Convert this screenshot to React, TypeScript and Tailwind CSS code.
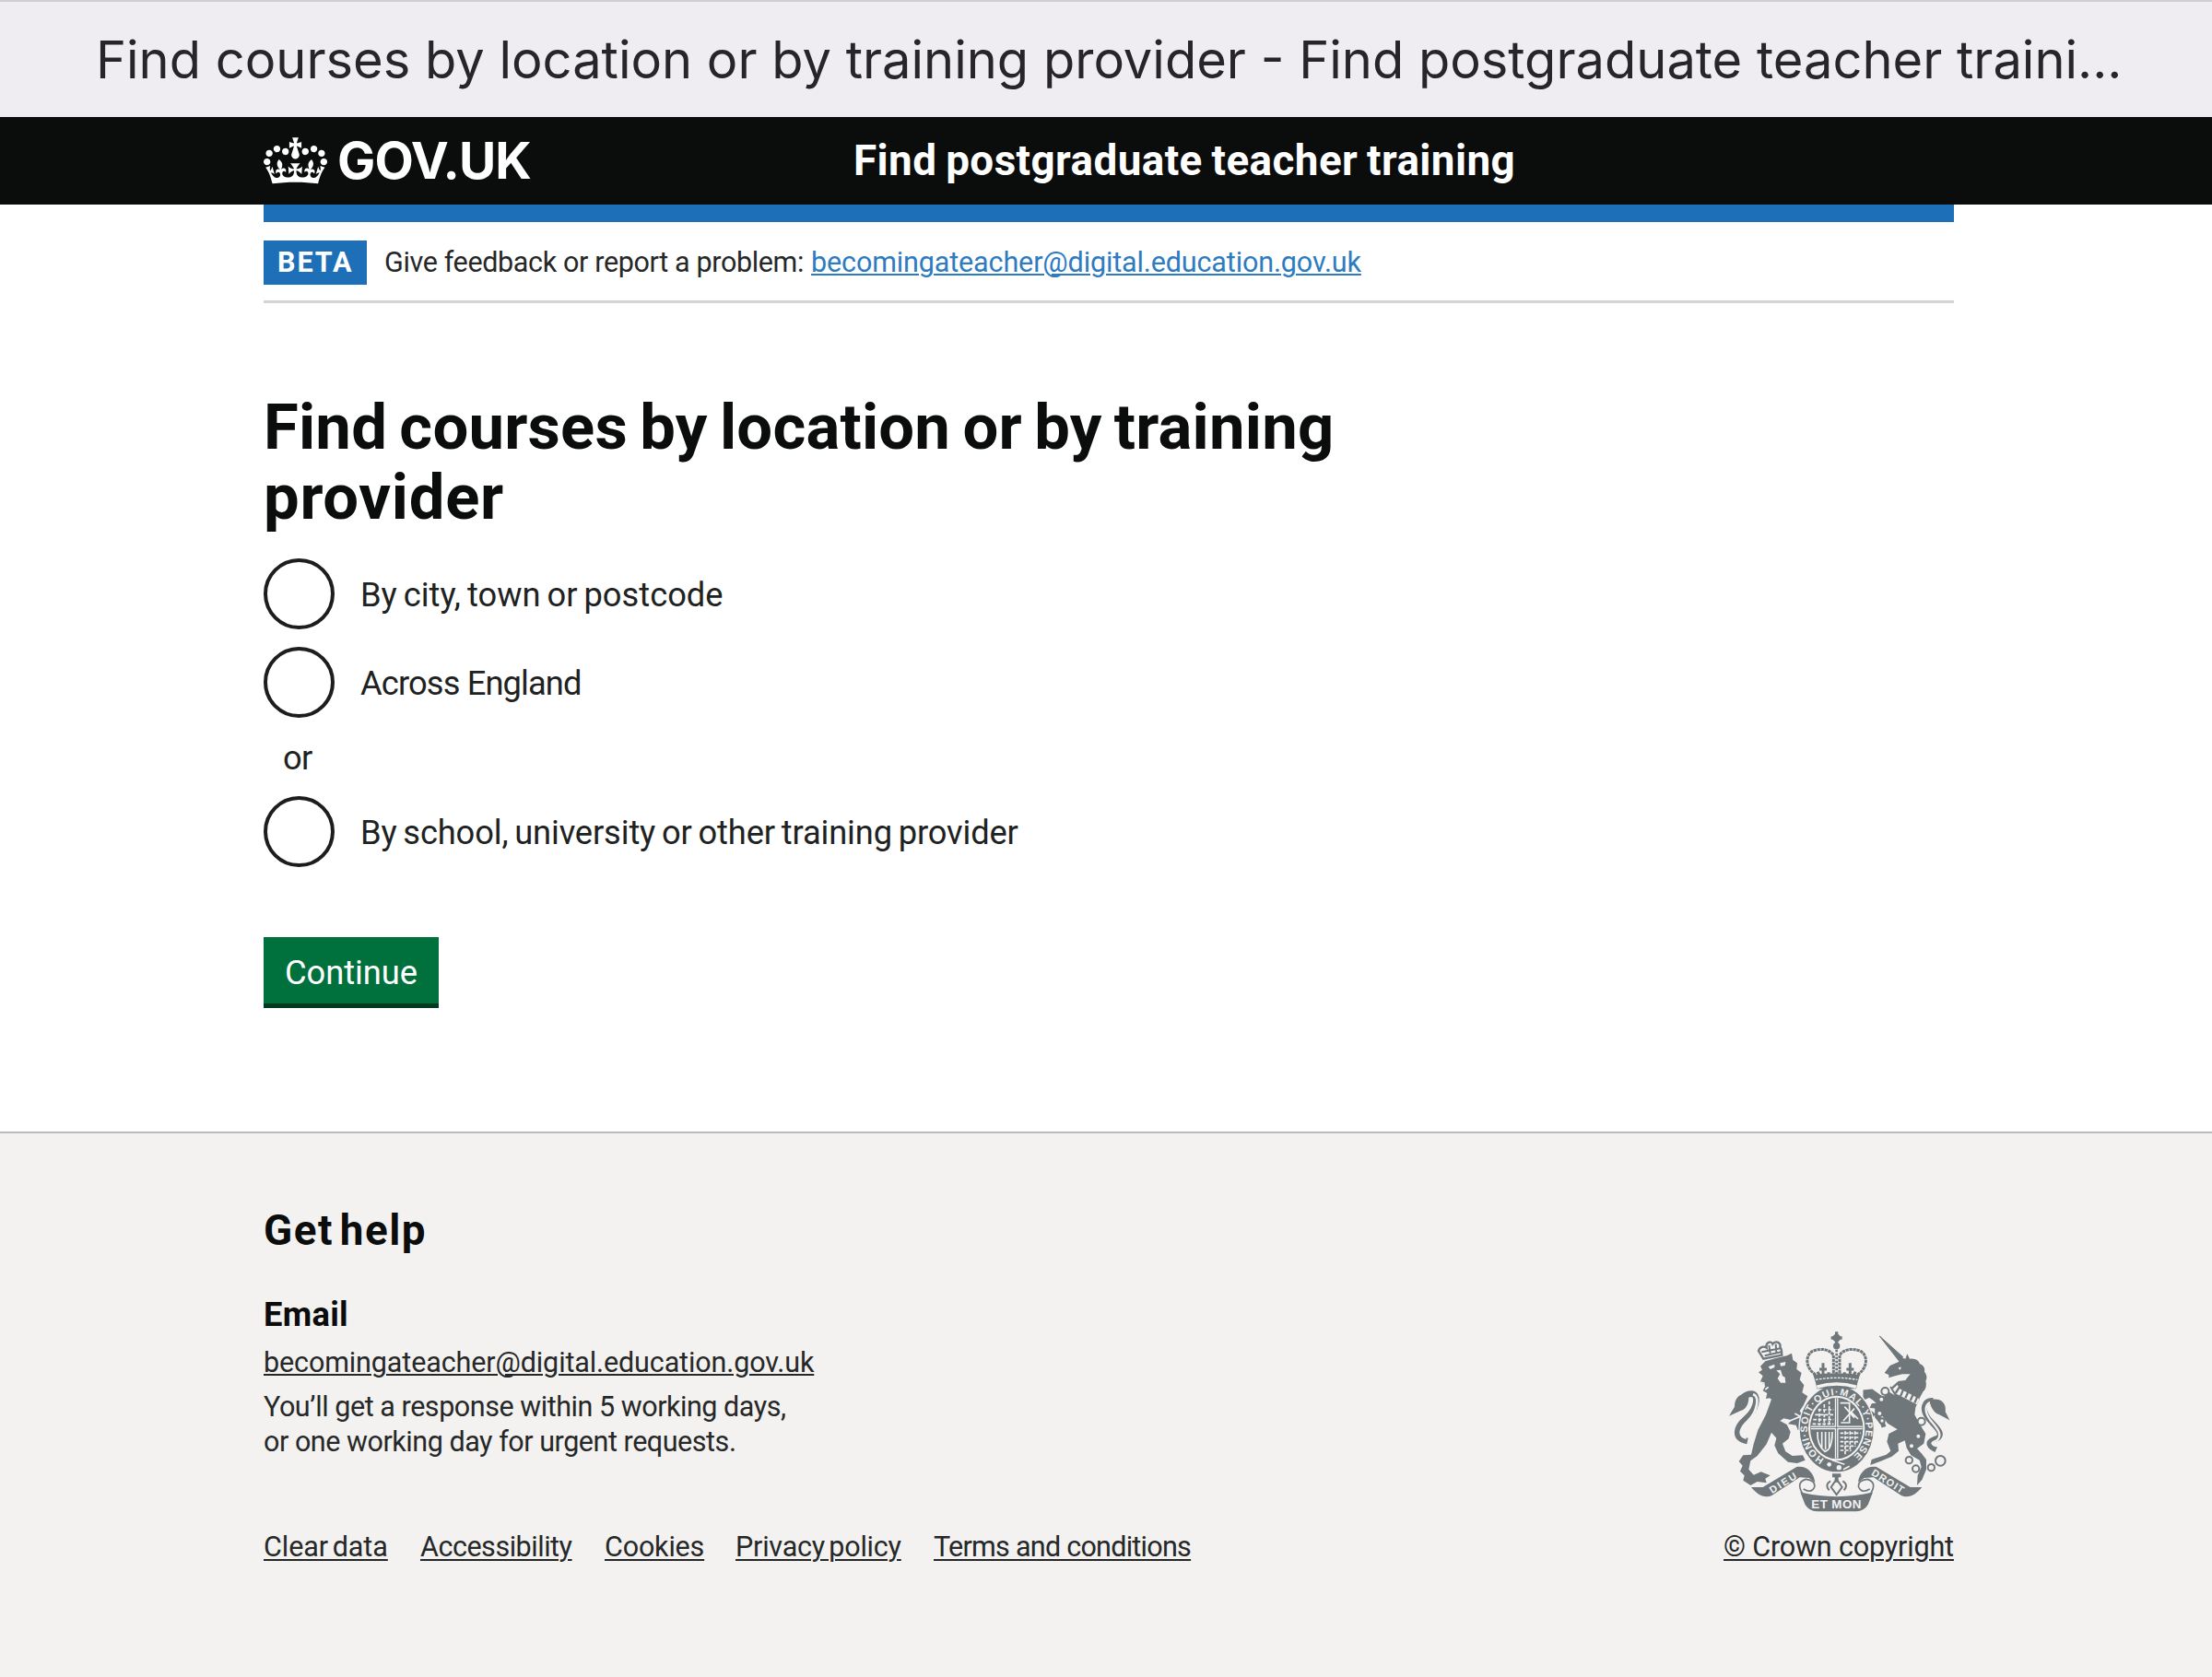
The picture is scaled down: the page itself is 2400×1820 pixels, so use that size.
const CROWN_PATH =
  "M25 30.2c3.5 1.5 7.7-.2 9.1-3.7 1.5-3.6-.2-7.8-3.9-9.2-3.6-1.4-7.6.3-9.1 3.9-1.4 3.5.3 7.5 3.9 9zM9 39.5c3.6 1.5 7.8-.2 9.2-3.7 1.5-3.6-.2-7.8-3.9-9.1-3.6-1.5-7.6.2-9.1 3.8-1.4 3.5.3 7.5 3.8 9zM4.4 57.2c3.5 1.5 7.7-.2 9.1-3.8 1.5-3.6-.2-7.7-3.9-9.1-3.5-1.5-7.6.3-9.1 3.8-1.4 3.5.3 7.6 3.9 9.1zm38.3-21.4c3.5 1.5 7.7-.2 9.1-3.8 1.5-3.6-.2-7.7-3.9-9.1-3.6-1.5-7.6.3-9.1 3.8-1.3 3.6.4 7.7 3.9 9.1zm64.4-5.6c-3.6 1.5-7.8-.2-9.1-3.7-1.5-3.6.2-7.8 3.8-9.2 3.6-1.4 7.7.3 9.2 3.9 1.3 3.5-.4 7.5-3.9 9zm15.9 9.3c-3.6 1.5-7.7-.2-9.1-3.7-1.5-3.6.2-7.8 3.7-9.1 3.6-1.5 7.7.2 9.2 3.8 1.5 3.5-.3 7.5-3.8 9zm4.7 17.7c-3.6 1.5-7.8-.2-9.2-3.8-1.5-3.6.2-7.7 3.9-9.1 3.6-1.5 7.7.3 9.2 3.8 1.3 3.5-.4 7.6-3.9 9.1zM89.3 35.8c-3.6 1.5-7.8-.2-9.2-3.8-1.4-3.6.2-7.7 3.9-9.1 3.6-1.5 7.7.3 9.2 3.8 1.4 3.6-.3 7.7-3.9 9.1zM69.7 17.7l8.9 4.7V9.3l-8.9 2.8c-.2-.3-.5-.6-.9-.9L72.4 0H59.6l3.5 11.2c-.3.3-.6.5-.9.9l-8.8-2.8v13.1l8.8-4.7c.3.3.6.7.9.9l-5 15.4v.1c-.2.8-.4 1.6-.4 2.4 0 4.1 3.1 7.5 7 8.1h.2c.3 0 .7.1 1 .1.4 0 .7 0 1-.1h.2c4-.6 7.1-4.1 7.1-8.1 0-.8-.1-1.7-.4-2.4V34l-5.1-15.4c.4-.2.7-.6 1-.9zM66 92.8c16.9 0 32.8 1.1 47.1 3.2 4-16.9 8.9-26.7 14-33.5l-9.6-3.4c1 4.9 1.1 7.2 0 10.2-1.5-1.4-3-4.3-4.2-8.7L108.6 76c2.8-2 5-3.2 7.5-3.3-4.4 9.4-10 11.9-13.6 11.2-4.3-.8-6.3-4.6-5.6-7.9 1-4.7 5.7-5.9 8-.5 4.3-8.7-3-11.4-7.6-8.8 7.1-7.2 7.9-13.5 2.1-21.1-8 6.1-8.1 12.3-4.5 20.8-4.7-5.4-12.1-2.5-9.5 6.2 3.4-5.2 7.9-2 7.2 3.1-.6 4.3-6.4 7.8-13.5 7.2-10.3-.9-10.9-8-11.2-13.8 2.5-.5 7.1 1.8 11 7.3L80.2 60c-4.1 4.4-8 5.3-12.3 5.4 1.4-4.4 8-11.6 8-11.6H55.5s6.4 7.2 7.9 11.6c-4.2-.1-8-1-12.3-5.4l1.4 16.4c3.9-5.5 8.5-7.7 10.9-7.3-.3 5.8-.9 12.8-11.1 13.8-7.2.6-12.9-2.9-13.5-7.2-.7-5 3.8-8.3 7.1-3.1 2.7-8.7-4.6-11.6-9.4-6.2 3.7-8.5 3.6-14.7-4.6-20.8-5.8 7.6-5 13.9 2.2 21.1-4.7-2.6-11.9.1-7.7 8.8 2.3-5.5 7.1-4.2 8.1.5.7 3.3-1.3 7.1-5.7 7.9-3.5.7-9-1.8-13.5-11.2 2.5.1 4.7 1.3 7.5 3.3l-4.7-15.4c-1.2 4.4-2.7 7.2-4.3 8.7-1.1-3-.9-5.3 0-10.2l-9.5 3.4c5 6.9 9.9 16.7 14 33.5 14.8-2.1 30.8-3.2 47.7-3.2z";

function Crown() {
  return (
    <svg viewBox="0 0 132 97" className="mb-px h-[51px] w-[69px] fill-white" aria-hidden="true">
      <path fillRule="evenodd" d={CROWN_PATH} />
    </svg>
  );
}

const INK = "#6f777b";
const PAPER = "#f3f2f1";

function RoyalArms() {
  return (
    <svg viewBox="30 30 750 618" className="h-[206px] w-[250px]" aria-hidden="true">
      {/* Lion: tail, body, crown and face */}
      <path d="M108 402 C60 392 72 356 102 330 C140 298 146 250 122 248 C108 248 100 252 92 262" fill="none" stroke={INK} strokeWidth="20" />
      <path d="M104 392 C74 384 86 358 110 336 C142 304 148 254 126 250" fill="none" stroke={PAPER} strokeWidth="8" />
      <path d="M112 248 C82 246 66 262 66 290 L48 320 L84 304 C102 300 112 282 112 262 Z" fill={INK} />
      <path
        d="M150 158 L166 142 L200 132 L236 124 L252 116 L256 138 L270 148 L268 168 L284 180 L278 202 L292 220 L286 244 L304 256 L290 286 L278 304 L292 326 L302 350 L300 384 L284 376 L290 360 L272 366 L266 350 L240 346 L252 334 L226 328 L214 336 L236 348 L248 372 L242 394 L222 410 L232 436 L254 450 L288 448 L296 464 L270 474 L240 470 L208 442 L196 416 L202 392 L186 374 L170 412 L140 450 L118 466 L112 494 L128 512 L152 502 L182 514 L166 524 L170 538 L140 534 L118 546 L94 530 L98 514 L84 500 L92 482 L80 468 L94 448 L120 446 L128 412 L142 366 L168 316 L186 266 L180 262 L168 264 L172 246 L158 238 L166 222 L150 208 L158 190 L144 178 L156 170 Z"
        fill={INK}
      />
      <path d="M160 134 L144 108 C148 94 162 92 170 98 C166 80 186 74 190 86 C200 72 218 82 214 96 C222 104 218 116 220 122 Z" fill={PAPER} stroke={INK} strokeWidth="7" />
      <path d="M154 112 L216 100 M164 124 L218 112 M178 90 L182 116 M200 86 L202 112" stroke={INK} strokeWidth="6" />
      <path d="M176 160 L196 152 L196 162 L182 168 Z M214 148 L232 144 L230 156 L216 158 Z M202 172 L216 170 L222 190 L230 194 L232 212 L216 212 L206 198 L214 184 Z" fill={PAPER} />
      <path d="M152 210 L162 214 L158 230 M166 234 L176 226 M240 338 L280 322 L262 312" stroke={PAPER} strokeWidth="5" fill="none" />

      {/* Unicorn: horn, tail, head, body and chain */}
      <path d="M538 60 L614 128 L602 142 Z" fill={INK} stroke={INK} strokeWidth="3" />
      <path d="M722 430 C700 420 690 406 716 396 C760 384 714 350 698 330 C672 296 684 268 712 270" fill="none" stroke={INK} strokeWidth="18" />
      <path d="M722 418 C706 412 704 406 724 400 C748 380 718 352 702 332 C680 302 688 278 708 274" fill="none" stroke={PAPER} strokeWidth="7" />
      <path d="M700 268 C736 258 756 276 752 306 L766 334 L732 316 C712 308 704 290 700 268 Z" fill={INK} />
      <path
        d="M554 180 L572 156 L600 144 L608 130 L622 134 L628 118 L636 134 C656 132 668 142 668 150 C684 156 686 168 684 176 C694 188 692 200 688 206 C692 220 688 234 680 240 L666 266 L640 252 L610 238 L592 214 L604 202 L622 202 L638 184 L612 184 L588 190 L568 196 L568 186 Z"
        fill={INK}
      />
      <path d="M598 164 L608 160 L606 170 Z M600 194 L634 186 L622 204 L590 208 Z" fill={PAPER} />
      <path d="M584 218 L600 246 L632 262 L662 278" fill="none" stroke={INK} strokeWidth="30" />
      <path d="M582 216 L598 240 L634 258 L664 274" fill="none" stroke={PAPER} strokeWidth="20" />
      <path d="M576 232 L596 214 M590 246 L604 224 M606 256 L616 232 M622 262 L632 240 M638 270 L648 248 M652 278 L662 254" stroke={INK} strokeWidth="7" />
      <path
        d="M566 240 L596 258 L630 272 L656 286 L652 316 L668 346 L688 378 L682 410 L660 426 L676 444 L690 462 L690 494 L676 528 L660 546 L662 514 L674 486 L668 464 L640 448 L626 424 L620 400 L598 410 L600 434 L578 452 L540 468 L508 480 L512 462 L560 446 L574 434 L562 404 L568 378 L596 364 L564 344 L544 316 L530 296 L506 294 L512 280 L538 276 Z"
        fill={INK}
      />
      <path d="M544 284 L520 262 L504 252 L492 258 L492 242 L512 240 L534 256 L556 270 M530 292 L530 322 L548 344 L552 356 M520 320 L502 304" fill="none" stroke={INK} strokeWidth="15" />
      <g fill={PAPER} stroke={INK} strokeWidth="6">
        <circle cx="556" cy="240" r="12" />
        <circle cx="544" cy="266" r="9" />
        <circle cx="538" cy="312" r="9" />
        <circle cx="546" cy="336" r="8" />
        <circle cx="674" cy="338" r="12" />
        <circle cx="664" cy="386" r="9" />
        <circle cx="642" cy="418" r="9" />
        <circle cx="634" cy="464" r="11" />
        <circle cx="656" cy="492" r="11" />
        <circle cx="706" cy="488" r="11" />
        <circle cx="736" cy="466" r="16" />
      </g>

      {/* Garter and quartered shield */}
      <ellipse cx="398" cy="362" rx="122" ry="142" fill={INK} stroke={PAPER} strokeWidth="4" />
      <ellipse cx="398" cy="360" rx="92" ry="106" fill={PAPER} />
      <ellipse cx="398" cy="360" rx="86" ry="100" fill={INK} />
      <path id="garter" d="M358 460 A95 109 0 1 1 438 460" fill="none" />
      <text fill={PAPER} fontFamily="Liberation Sans" fontWeight="700" fontSize="32">
        <textPath href="#garter" textLength="540">HONI·SOIT·QUI·MAL·Y·PENSE</textPath>
      </text>
      <path d="M398 262 V458 M314 358 H482" stroke={PAPER} strokeWidth="11" />
      <path d="M398 262 V458 M314 358 H482" stroke={INK} strokeWidth="3" />
      <g stroke={PAPER} strokeWidth="5" fill="none">
        <path d="M338 300 H388 M328 316 H388 M322 332 H388 M320 346 H388 M358 282 V350 M374 272 V350 M342 296 V350" strokeDasharray="11 5" />
        <path d="M410 278 H440 V342 H412 M424 290 L456 326 M456 296 L420 336 M446 308 L468 330" />
        <path d="M336 372 Q334 416 360 436 Q384 430 384 372 M350 372 V424 M362 372 V430 M374 372 V424" />
        <path d="M410 376 H476 M410 390 H472 M410 404 H468 M410 418 H460 M410 432 H446 M426 370 V446 M442 370 V436 M458 370 V420" strokeDasharray="11 5" />
      </g>
      <circle cx="374" cy="478" r="7" fill={PAPER} />
      <circle cx="406" cy="488" r="8" fill={PAPER} />
      <path d="M384 464 L424 478 M440 484 L420 494" stroke={PAPER} strokeWidth="5" />

      {/* Crown over the shield */}
      <path d="M398 46 V100 M380 66 H416" stroke={INK} strokeWidth="10" />
      <circle cx="398" cy="66" r="13" fill={INK} />
      <circle cx="398" cy="92" r="11" fill={INK} />
      <path d="M330 186 C296 164 294 122 322 108 C350 98 376 104 388 122 V186" fill="none" stroke={INK} strokeWidth="9" strokeDasharray="10 2" />
      <path d="M466 186 C500 164 502 122 474 108 C446 98 420 104 408 122 V186" fill="none" stroke={INK} strokeWidth="9" strokeDasharray="10 2" />
      <path d="M398 104 V186" stroke={INK} strokeWidth="8" strokeDasharray="8 4" />
      <path d="M354 148 V188 M342 168 H366 M442 148 V188 M430 168 H454 M336 176 L344 190 M460 176 L452 190 M372 178 V190 M424 178 V190" stroke={INK} strokeWidth="9" />
      <path d="M322 186 Q398 176 474 186 L466 212 L462 232 H334 L330 212 Z" fill={INK} />
      <path d="M330 202 Q398 190 466 202" fill="none" stroke={PAPER} strokeWidth="4" strokeDasharray="8 4" />
      <path d="M334 226 Q398 206 462 226" fill="none" stroke={PAPER} strokeWidth="11" />

      {/* Motto ribbon */}
      <path d="M120 552 L158 552 L268 486 C300 480 324 504 328 536 L308 522 L278 520 L186 580 C160 590 136 572 120 552 Z" fill={INK} />
      <path d="M676 552 L638 552 L528 486 C496 480 472 504 468 536 L488 522 L518 520 L610 580 C636 590 660 572 676 552 Z" fill={INK} />
      <path d="M284 572 Q398 598 512 572 L498 608 Q486 628 462 628 H334 Q310 628 298 608 Z" fill={INK} stroke={INK} strokeWidth="5" />
      <path d="M288 574 Q264 536 298 526 Q330 530 326 552 Q316 574 290 558" fill={PAPER} stroke={INK} strokeWidth="5" />
      <path d="M508 574 Q532 536 498 526 Q466 530 470 552 Q480 574 506 558" fill={PAPER} stroke={INK} strokeWidth="5" />
      <g fill={PAPER} fontFamily="Liberation Sans" fontWeight="700">
        <text transform="translate(188 574) rotate(-32)" fontSize="33" textLength="98">DIEU</text>
        <text transform="translate(509 511) rotate(32)" fontSize="33" textLength="118">DROIT</text>
        <text x="316" y="622" fontSize="40" textLength="162">ET MON</text>
      </g>
      <path d="M398 508 V536 M384 514 H412" stroke={INK} strokeWidth="12" />
      <path d="M398 526 L416 552 L398 576 L380 552 Z M378 532 Q358 544 374 562 M418 532 Q438 544 422 562" fill="none" stroke={INK} strokeWidth="6" />
    </svg>
  );
}

function Radio({ label, tracking }: { label: string; tracking: string }) {
  return (
    <label className="flex h-[77px] items-center">
      <span className="size-[77px] shrink-0 rounded-full border-4 border-[#1c1d1d] bg-white" />
      <span className={"pt-[3px] pl-[28px] text-[36.3px] leading-[40px] whitespace-nowrap text-[#202222] " + tracking}>{label}</span>
    </label>
  );
}

const footerLinks = [
  { label: "Clear data", style: "tracking-[-0.05px] [word-spacing:-3px] w-[170px]" },
  { label: "Accessibility", style: "tracking-[-0.47px] w-[200px]" },
  { label: "Cookies", style: "tracking-[-0.18px] w-[142px]" },
  { label: "Privacy policy", style: "tracking-[-0.22px] [word-spacing:-3px] w-[215px]" },
  { label: "Terms and conditions", style: "tracking-[-0.73px]" },
];

export default function App() {
  return (
    <div className="flex h-[1820px] w-[2400px] flex-col overflow-hidden bg-white font-[Roboto,sans-serif] text-[#0b0c0c]">
      <div className="flex h-[127px] shrink-0 items-center border-t-2 border-[#d0cdd4] bg-[#efecf2] pl-[104px]">
        <span className="whitespace-nowrap font-[Inter,sans-serif] text-[56px] leading-[70px] font-[430] text-[#262528]">
          Find courses by location or by training provider - Find postgraduate teacher traini...
        </span>
      </div>

      <header className="flex h-[95px] shrink-0 items-center bg-[#0b0c0c] pl-[286px] text-white">
        <div className="flex w-[640px] items-center gap-[11px]">
          <Crown />
          <span className="-mt-[2px] font-[Inter,sans-serif] text-[55px] leading-[60px] font-bold tracking-[-0.9px]">GOV.UK</span>
        </div>
        <span className="text-[45.8px] leading-[60px] font-bold tracking-[0.42px] [word-spacing:-2px]">
          Find postgraduate teacher training
        </span>
      </header>

      <div className="mx-[286px] h-[19px] w-[1834px] shrink-0 bg-[#1d70b8]" />

      <div className="mx-[286px] flex h-[88px] w-[1834px] shrink-0 items-start border-b-[3px] border-[#d3d5d5] pt-5 text-[30.5px] leading-[48px]">
        <strong className="h-[48px] w-[112px] bg-[#1d70b8] pl-[15px] font-bold tracking-[1.92px] text-white">BETA</strong>
        <span className="pl-[19px] whitespace-nowrap tracking-[-0.36px] text-[#262828]">Give feedback or report a problem:</span>
        <a className="ml-[8px] tracking-[-0.13px] whitespace-nowrap text-[#2e7bbf] underline decoration-2 underline-offset-[2px]">
          becomingateacher@digital.education.gov.uk
        </a>
      </div>

      <main className="flex h-[899px] shrink-0 flex-col items-start pt-[97px] pl-[286px]">
        <h1 className="text-[68.8px] leading-[76px] font-bold">
          <span className="block whitespace-nowrap tracking-[0.2px] [word-spacing:-4px]">Find courses by location or by training</span>
          <span className="block tracking-[0.7px]">provider</span>
        </h1>
        <div className="mt-[28px] flex flex-col">
          <Radio label="By city, town or postcode" tracking="tracking-[0px] [word-spacing:-2px]" />
          <div className="mt-[19px]">
            <Radio label="Across England" tracking="tracking-[-0.88px]" />
          </div>
          <div className="flex h-[85px] items-center pt-[2px] pl-[21px] text-[36.3px] leading-[40px] tracking-[-0.7px] text-[#202222]">or</div>
          <Radio label="By school, university or other training provider" tracking="tracking-[-0.15px] [word-spacing:-2px]" />
        </div>
        <button className="mt-[76px] h-[77px] w-[190px] border-b-[5px] border-[#003a1f] bg-[#00703c] pt-[5px] pl-[23px] text-left text-[36.3px] leading-[40px] tracking-[-0.05px] text-white">
          Continue
        </button>
      </main>

      <footer className="flex flex-1 items-start justify-between border-t-2 border-[#b9bbbc] bg-[#f3f2f1] pr-[280px] pl-[286px]">
        <div className="flex flex-col">
          <h2 className="mt-[80px] text-[45.8px] leading-[52px] font-bold tracking-[1.5px] [word-spacing:-6px]">Get help</h2>
          <h3 className="mt-[45px] text-[36.3px] leading-[40px] font-bold tracking-[0.3px]">Email</h3>
          <a className="mt-[13px] self-start text-[30.5px] leading-[38px] tracking-[-0.12px] text-[#262828] underline decoration-2 underline-offset-[2px]">
            becomingateacher@digital.education.gov.uk
          </a>
          <p className="mt-[10px] text-[30.5px] leading-[38px] tracking-[-0.46px] text-[#262828]">
            You’ll get a response within 5 working days,
            <br />
            or one working day for urgent requests.
          </p>
          <nav className="mt-[76px] flex text-[30.5px] leading-[38px] text-[#262828]">
            {footerLinks.map((link) => (
              <span key={link.label} className={"whitespace-nowrap " + link.style}>
                <a className="underline decoration-2 underline-offset-[3px]">{link.label}</a>
              </span>
            ))}
          </nav>
        </div>
        <div className="flex flex-col items-center pt-[210px]">
          <RoyalArms />
          <a className="mt-[14px] text-[30.5px] leading-[38px] tracking-[-0.16px] whitespace-nowrap text-[#262828] underline decoration-2 underline-offset-[3px]">
            © Crown copyright
          </a>
        </div>
      </footer>
    </div>
  );
}
